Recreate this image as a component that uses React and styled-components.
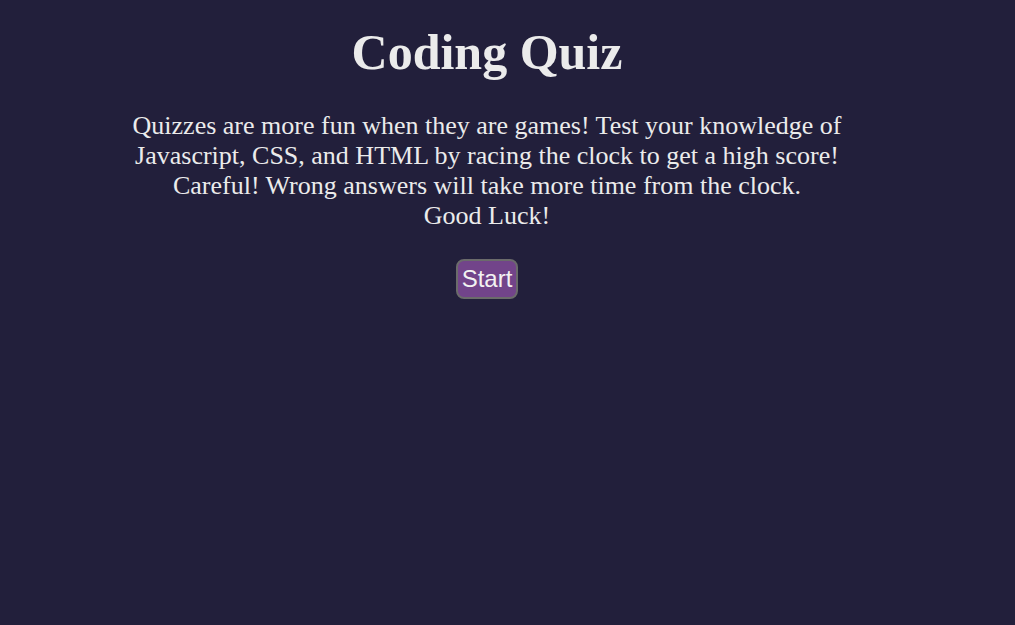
import React from "react";
import styled, { createGlobalStyle } from "styled-components";

const GlobalStyle = createGlobalStyle`
  html, body {
    background-color: #221f3b;
  }
  body {
    margin: 8px;
    color: #ebebeb;
    font-family: "Liberation Serif", "Times New Roman", serif;
  }
`;

const Main = styled.main`
  width: 958px;
  display: flex;
  flex-direction: column;
  align-items: center;
  text-align: center;
`;

const Title = styled.h1`
  font-size: 50px;
  font-weight: bold;
  margin: 16px 0 0;
  line-height: 1.15;
`;

const Intro = styled.p`
  font-size: 26px;
  line-height: 30px;
  margin: 29px 0 0;
`;

const StartButton = styled.button`
  margin-top: 28px;
  font-family: "Liberation Sans", Arial, sans-serif;
  font-size: 24px;
  color: #f2f2f2;
  background-color: #72448a;
  border: 2px solid #6b6b6b;
  border-radius: 8px;
  padding: 4px 4px;
  cursor: pointer;
`;

function App() {
  return (
    <>
      <GlobalStyle />
      <Main>
        <Title>Coding Quiz</Title>
        <Intro>
          Quizzes are more fun when they are games! Test your knowledge of
          <br />
          Javascript, CSS, and HTML by racing the clock to get a high score!
          <br />
          Careful! Wrong answers will take more time from the clock.
          <br />
          Good Luck!
        </Intro>
        <StartButton>Start</StartButton>
      </Main>
    </>
  );
}

export default App;
